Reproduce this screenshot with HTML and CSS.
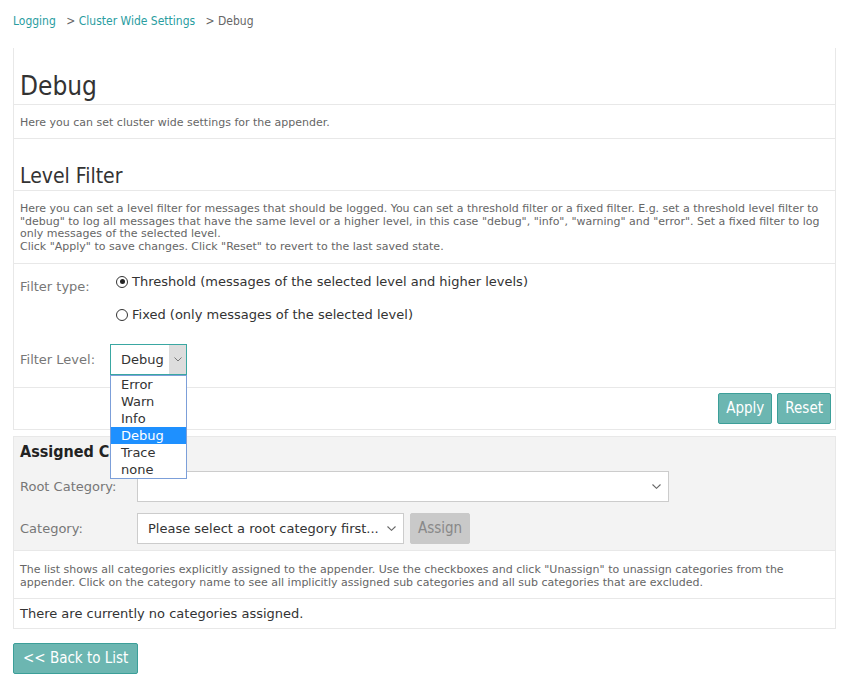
FILE: index.html
```html
<!DOCTYPE html>
<html lang="en">
<head>
    <meta charset="UTF-8">
    <meta name="viewport" content="width=device-width, initial-scale=1.0">
    <title>Debug - Cluster Wide Settings</title>
    <link rel="stylesheet" href="styles.css">
</head>
<body>

    <!-- Breadcrumb -->
    <div class="breadcrumb">
        <a href="#">Logging</a>
        <span class="sep">&gt;</span> <a href="#">Cluster Wide Settings</a>
        <span class="sep">&gt;</span> <span class="current">Debug</span>
    </div>

    <!-- Appender settings -->
    <div class="panel">
        <div class="section title-section">
            <h1>Debug</h1>
        </div>
        <div class="section desc">
            Here you can set cluster wide settings for the appender.
        </div>
        <div class="section subtitle-section">
            <h2>Level Filter</h2>
        </div>
        <div class="section desc long">
            Here you can set a level filter for messages that should be logged. You can set a threshold filter or a fixed filter. E.g. set a threshold level filter to "debug" to log all messages that have the same level or a higher level, in this case "debug", "info", "warning" and "error". Set a fixed filter to log only messages of the selected level.<br>
            Click "Apply" to save changes. Click "Reset" to revert to the last saved state.
        </div>
        <div class="section form-section">
            <div class="form-row top">
                <div class="form-label radio-label">Filter type:</div>
                <div class="radio-group">
                    <label class="radio"><span class="radio-dot checked"></span>Threshold (messages of the selected level and higher levels)</label>
                    <label class="radio"><span class="radio-dot"></span>Fixed (only messages of the selected level)</label>
                </div>
            </div>
            <div class="form-row level-row">
                <div class="form-label">Filter Level:</div>
                <div class="level-select">
                    <div class="fake-select focused">
                        <span class="select-value">Debug</span>
                        <span class="select-arrow">
                            <svg width="8" height="5" viewBox="0 0 8 5"><path d="M0.5 0.5 L4 4 L7.5 0.5" fill="none" stroke="#777" stroke-width="1"/></svg>
                        </span>
                    </div>
                    <ul class="select-list">
                        <li>Error</li>
                        <li>Warn</li>
                        <li>Info</li>
                        <li class="selected">Debug</li>
                        <li>Trace</li>
                        <li>none</li>
                    </ul>
                </div>
            </div>
        </div>
        <div class="section actions">
            <button class="btn">Apply</button>
            <button class="btn">Reset</button>
        </div>
    </div>

    <!-- Assigned categories -->
    <div class="panel categories">
        <div class="assign-box">
            <h3>Assigned Categories</h3>
            <div class="form-row cat-row">
                <div class="form-label cat-label">Root Category:</div>
                <div class="fake-select wide">
                    <span class="select-value"></span>
                    <svg class="chevron" width="9" height="5" viewBox="0 0 9 5"><path d="M0.5 0.5 L4.5 4.3 L8.5 0.5" fill="none" stroke="#666" stroke-width="1.1"/></svg>
                </div>
            </div>
            <div class="form-row cat-row">
                <div class="form-label cat-label">Category:</div>
                <div class="fake-select medium">
                    <span class="select-value">Please select a root category first...</span>
                    <svg class="chevron" width="9" height="5" viewBox="0 0 9 5"><path d="M0.5 0.5 L4.5 4.3 L8.5 0.5" fill="none" stroke="#666" stroke-width="1.1"/></svg>
                </div>
                <button class="btn disabled">Assign</button>
            </div>
        </div>
        <div class="section desc list-desc">
            The list shows all categories explicitly assigned to the appender. Use the checkboxes and click "Unassign" to unassign categories from the appender. Click on the category name to see all implicitly assigned sub categories and all sub categories that are excluded.
        </div>
        <div class="section empty">
            There are currently no categories assigned.
        </div>
    </div>

    <button class="btn back">&lt;&lt; Back to List</button>

</body>
</html>
```

FILE: styles.css
```css
body {
    font-family: "DejaVu Sans", sans-serif;
    margin: 0;
    padding: 13px 17px 0 13px;
    color: #333;
    background-color: white;
}
a {
    color: #2a9d9f;
    text-decoration: none;
}
.breadcrumb {
    font-size: 12px;
    font-stretch: condensed;
    line-height: 16px;
    color: #666;
}
.breadcrumb .sep {
    margin-left: 7px;
}
.panel {
    border: 1px solid #e8e8e8;
    border-top: none;
    margin-top: 19px;
    position: relative;
}
.section {
    border-bottom: 1px solid #e8e8e8;
    padding: 0 6px;
}
.section:last-child {
    border-bottom: none;
}
h1 {
    font-size: 26px;
    font-weight: normal;
    font-stretch: condensed;
    line-height: 30px;
    margin: 0;
}
.title-section {
    padding-top: 23px;
    padding-bottom: 3px;
}
h2 {
    font-size: 21px;
    font-weight: normal;
    font-stretch: condensed;
    line-height: 26px;
    margin: 0;
}
.subtitle-section {
    padding-top: 24px;
    padding-bottom: 1px;
}
.desc {
    font-size: 11px;
    line-height: 14px;
    color: #666;
    padding-top: 11px;
    padding-bottom: 8px;
}
.desc.long {
    line-height: 12.7px;
    padding-top: 12px;
    padding-bottom: 9px;
}
.form-section {
    padding-top: 8px;
    padding-bottom: 12px;
}
.form-row {
    display: flex;
    align-items: center;
}
.form-row.top {
    align-items: flex-start;
}
.form-label {
    width: 90px;
    font-size: 13px;
    color: #777;
    flex-shrink: 0;
}
.radio-label {
    line-height: 20px;
    padding-top: 5px;
}
.radio-group {
    display: flex;
    flex-direction: column;
    gap: 13px;
    margin-left: 6px;
}
.radio {
    display: flex;
    align-items: center;
    font-size: 13px;
    line-height: 20px;
    color: #333;
}
.radio-dot {
    width: 10px;
    height: 10px;
    border: 1px solid #333;
    border-radius: 50%;
    margin-right: 4px;
    position: relative;
    box-sizing: content-box;
}
.radio-dot.checked::after {
    content: "";
    position: absolute;
    left: 2.5px;
    top: 2.5px;
    width: 5px;
    height: 5px;
    border-radius: 50%;
    background-color: #222;
}
.level-row {
    margin-top: 19px;
}
.level-select {
    position: relative;
}
.fake-select {
    height: 31px;
    box-sizing: border-box;
    border: 1px solid #ccc;
    background-color: white;
    display: flex;
    align-items: center;
    font-size: 13px;
    color: #333;
    position: relative;
}
.fake-select.focused {
    width: 77px;
    border-color: #3aa7a2;
}
.select-value {
    padding-left: 10px;
    flex: 1;
    white-space: nowrap;
}
.select-arrow {
    width: 17px;
    align-self: stretch;
    background-color: #ddd;
    display: flex;
    align-items: center;
    justify-content: center;
}
.select-list {
    position: absolute;
    top: 31px;
    left: 0;
    width: 77px;
    box-sizing: border-box;
    margin: 0;
    padding: 0;
    list-style: none;
    border: 1px solid #7c9fd9;
    background-color: white;
    z-index: 10;
}
.select-list li {
    font-size: 13px;
    line-height: 17px;
    padding-left: 10px;
    color: #333;
}
.select-list li.selected {
    background-color: #1e90ff;
    color: white;
}
.actions {
    display: flex;
    justify-content: flex-end;
    gap: 5px;
    padding: 5px 4px 5px;
}
.btn {
    font-family: inherit;
    font-stretch: condensed;
    font-size: 15px;
    height: 31px;
    padding: 0 7px;
    background-color: #6cb6b1;
    border: 1px solid #3c9f99;
    border-radius: 2px;
    color: white;
    cursor: pointer;
}
.btn:hover {
    background-color: #5aa9a4;
}
.categories {
    border-top: 1px solid #e8e8e8;
    margin-top: 6px;
}
.assign-box {
    background-color: #f3f3f3;
    border-bottom: 1px solid #e8e8e8;
    padding: 5px 6px 6px;
}
h3 {
    font-size: 16px;
    font-stretch: condensed;
    line-height: 20px;
    margin: 0 0 9px;
    color: #222;
}
.cat-row + .cat-row {
    margin-top: 11px;
}
.cat-label {
    width: 117px;
}
.fake-select.wide {
    width: 532px;
}
.fake-select.medium {
    width: 267px;
}
.chevron {
    margin-right: 7px;
}
.btn.disabled {
    background-color: #c9c9c9;
    border-color: #c9c9c9;
    color: #888;
    margin-left: 6px;
    cursor: default;
}
.list-desc {
    padding-top: 12px;
    padding-bottom: 9px;
    line-height: 13px;
}
.empty {
    font-size: 13px;
    line-height: 16px;
    padding-top: 7px;
    padding-bottom: 6px;
    color: #333;
}
.btn.back {
    margin-top: 14px;
    padding: 0 9px;
}
```
